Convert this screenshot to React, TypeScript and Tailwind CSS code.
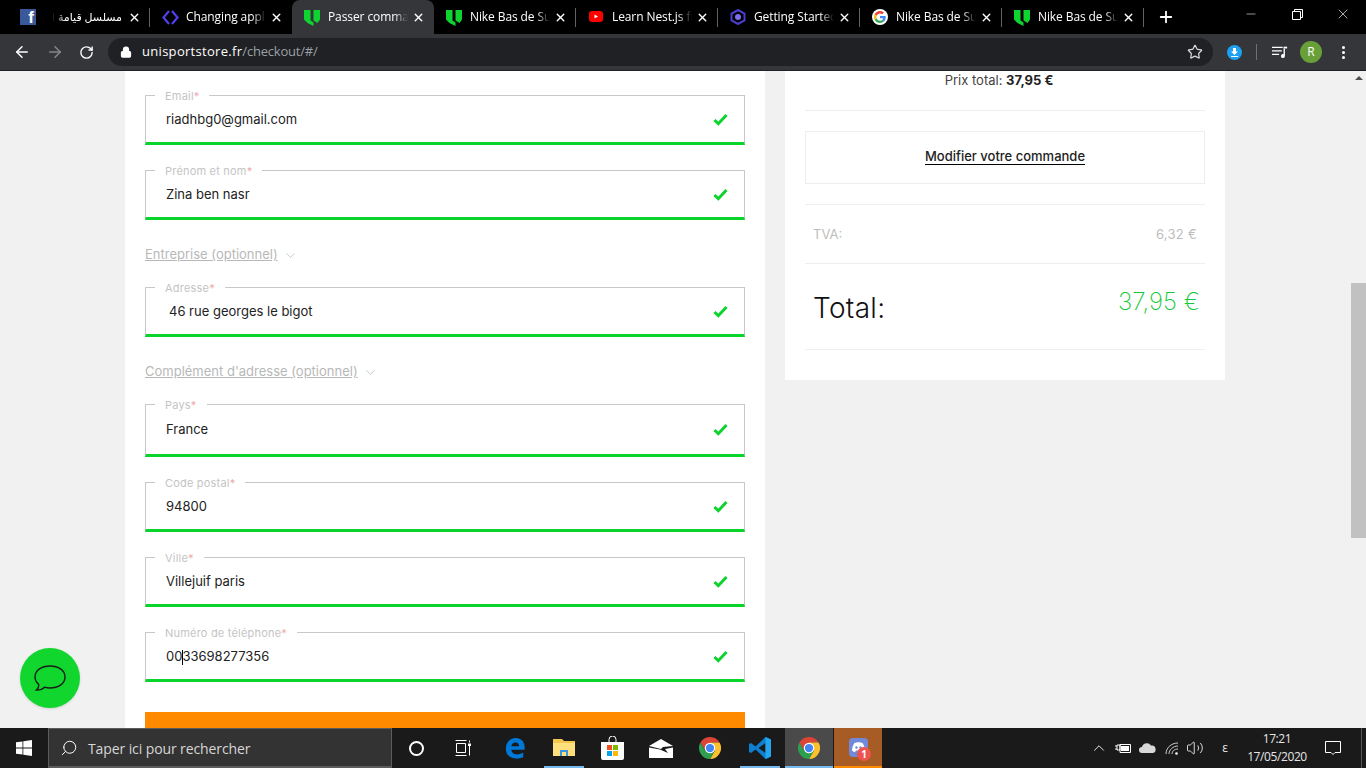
import type React from "react"
import { ArrowLeft, ArrowRight, RotateCw, Lock, Star, X, Plus, Minus, ChevronDown, ChevronUp, Search, Volume2 } from "lucide-react"

const UniIcon = () => (
  <svg width="16" height="17" viewBox="0 0 16 17" className="shrink-0">
    <path d="M0 1h6.500v10.500l3 2V17l-6-3-3.500-3.500z" fill="#0fd32f" />
    <path d="M9.500 1H16v9.500L13.500 14 9.500 11.500z" fill="#0fd32f" />
  </svg>
)

const FbIcon = () => (
  <div className="w-4 h-4 shrink-0 bg-[#3b5998] flex items-end justify-end overflow-hidden">
    <span className="text-white font-bold text-[17px] leading-[15px] pr-[2px] font-['Liberation_Sans',sans-serif]">f</span>
  </div>
)

const DiamondIcon = () => (
  <svg width="17" height="17" viewBox="0 0 17 17" className="shrink-0" fill="none" stroke="#4f3ff0" strokeWidth="2.200">
    <path d="M7 2 1.500 8.500 7 15" />
    <path d="M10 2l5.500 6.500L10 15" />
  </svg>
)

const YtIcon = () => (
  <svg width="16" height="12" viewBox="0 0 16 12" className="shrink-0">
    <rect width="14" height="11" x="1" rx="3" fill="#ff0000" />
    <path d="M6.500 3.500v4l3.500-2z" fill="#fff" />
  </svg>
)

const HexIcon = () => (
  <svg width="16" height="16" viewBox="0 0 16 16" className="shrink-0">
    <path d="M8 1l6.500 3.500v7L8 15l-6.500-3.500v-7z" fill="none" stroke="#4a3fd0" strokeWidth="2" />
    <circle cx="8" cy="8" r="3" fill="#7a6ff0" />
  </svg>
)

const GoogleIcon = () => (
  <div className="w-4 h-4 shrink-0 rounded-full bg-white flex items-center justify-center">
    <svg width="12" height="12" viewBox="0 0 48 48">
      <path fill="#ea4335" d="M24 9.500c3.500 0 6.700 1.300 9.100 3.500l6.800-6.800C35.800 2.400 30.200 0 24 0 14.600 0 6.500 5.400 2.600 13.200l7.900 6.200C12.400 13.600 17.700 9.500 24 9.500z" />
      <path fill="#4285f4" d="M46.900 24.500c0-1.600-.1-3.100-.4-4.500H24v9h12.900c-.6 3-2.200 5.500-4.800 7.200l7.700 6c4.500-4.200 7.100-10.300 7.100-17.700z" />
      <path fill="#fbbc05" d="M10.500 28.600c-.5-1.400-.8-3-.8-4.600s.3-3.200.8-4.600l-7.900-6.200C.9 16.500 0 20.100 0 24s.9 7.500 2.600 10.800z" />
      <path fill="#34a853" d="M24 48c6.500 0 11.900-2.100 15.900-5.800l-7.700-6c-2.100 1.400-4.900 2.300-8.200 2.300-6.300 0-11.600-4.200-13.500-9.900l-7.900 6.200C6.500 42.600 14.600 48 24 48z" />
    </svg>
  </div>
)

const tabs: { title: string; icon: React.ReactNode; rtl?: boolean; active?: boolean }[] = [
  { title: "مسلسل قيامة ار", icon: <FbIcon />, rtl: true },
  { title: "Changing appl", icon: <DiamondIcon /> },
  { title: "Passer comma", icon: <UniIcon />, active: true },
  { title: "Nike Bas de Su", icon: <UniIcon /> },
  { title: "Learn Nest.js fr", icon: <YtIcon /> },
  { title: "Getting Startec", icon: <HexIcon /> },
  { title: "Nike Bas de Su", icon: <GoogleIcon /> },
  { title: "Nike Bas de Su", icon: <UniIcon /> },
]

const Tab = ({ title, icon, rtl, active, sep }: { title: string; icon: React.ReactNode; rtl?: boolean; active?: boolean; sep: boolean }) => (
  <div className={`relative w-[142px] h-[34px] flex items-center pl-3 pr-[9px] ${active ? "bg-[#35363a] rounded-t-lg" : ""}`}>
    <div className="w-4 flex justify-center shrink-0">{icon}</div>
    <div
      dir={rtl ? "rtl" : "ltr"}
      className={`flex-1 min-w-0 overflow-hidden whitespace-nowrap text-white ${rtl ? "text-[11px] ml-4 mr-[2px] [mask-image:linear-gradient(to_right,transparent,black_14px)]" : "text-[12px] ml-2 tracking-[-0.1px] [mask-image:linear-gradient(to_left,transparent,black_14px)]"}`}
    >
      {title}
    </div>
    <X size={13} strokeWidth={2.600} className="text-white shrink-0 ml-1" />
    {sep && <div className="absolute right-0 top-[8px] w-px h-[19px] bg-[#5f6368]" />}
  </div>
)

const fields = [
  { label: "Email", value: "riadhbg0@gmail.com", gapAfter: "mb-[25px]" },
  { label: "Prénom et nom", value: "Zina ben nasr", gapAfter: "mb-[25px]" },
  { optional: "Entreprise (optionnel)" },
  { label: "Adresse", value: " 46 rue georges le bigot", gapAfter: "mb-[25px]", indent: true },
  { optional: "Complément d'adresse (optionnel)" },
  { label: "Pays", value: "France", gapAfter: "mb-[25px]", tall: true },
  { label: "Code postal", value: "94800", gapAfter: "mb-[25px]" },
  { label: "Ville", value: "Villejuif paris", gapAfter: "mb-[25px]" },
  { label: "Numéro de téléphone", value: "00|33698277356", gapAfter: "mb-[30px]" },
]

const Field = ({ label, value, gapAfter, indent, tall }: { label: string; value: string; gapAfter: string; indent?: boolean; tall?: boolean }) => {
  const parts = value.split("|")
  return (
    <div className={`relative ${tall ? "h-[53px]" : "h-[50px]"} border border-[#c8c8c8] border-b-[3px] border-b-[#0ad32c] flex items-center justify-between pl-5 pr-4 ${gapAfter}`}>
      <span className="absolute left-[9px] -top-[7px] bg-white px-[10px] text-[11px] leading-[14px] text-[#c4c4c4] tracking-[0.2px]">
        {label}
        <span className="text-[#eeaaaa]">*</span>
      </span>
      <span className={`text-[13px] text-[#222] pt-[2px] ${indent ? "pl-[3px]" : ""} ${tall ? "-mt-[1px]" : ""}`}>
        {parts[0]}
        {parts.length > 1 && <span className="inline-block w-px h-[15px] bg-black align-middle -mr-px" />}
        {parts[1]}
      </span>
      <svg width="15" height="13" viewBox="0 0 15 13" className="shrink-0">
        <path d="M1.500 7l3.800 3.700L13.500 2" fill="none" stroke="#0ad32c" strokeWidth="3" />
      </svg>
    </div>
  )
}

const Optional = ({ text }: { text: string }) => (
  <div className="h-[67px] -mt-[25px] pt-[3px] flex items-center gap-[6px] text-[13px] text-[#b8b8b8]">
    <span className="underline">{text}</span>
    <ChevronDown size={15} strokeWidth={1.200} className="-ml-[1px]" />
  </div>
)

const ChromeIcon = () => (
  <svg width="22" height="22" viewBox="0 0 48 48">
    <path d="M3.200 12A24 24 0 0 1 44.800 12H24L13.600 30z" fill="#db4437" />
    <path d="M44.800 12A24 24 0 0 1 24 48L34.400 30 24 12z" fill="#fbc02d" />
    <path d="M24 48A24 24 0 0 1 3.200 12L13.600 30 34.400 30z" fill="#2e9e4f" />
    <circle cx="24" cy="24" r="11.500" fill="#fff" />
    <circle cx="24" cy="24" r="9" fill="#4285f4" />
  </svg>
)

const TaskSlot = ({ className, children }: { className?: string; children: React.ReactNode }) => (
  <div className={`h-10 flex items-center justify-center shrink-0 ${className ?? ""}`}>{children}</div>
)

export default function App() {
  return (
    <div className="w-[1366px] h-[768px] overflow-hidden flex flex-col font-['Inter',sans-serif] bg-[#f1f1f1]">
      {/* Tab strip */}
      <div className="h-[34px] bg-black flex pl-2 font-['Open_Sans','DejaVu_Sans',sans-serif] shrink-0">
        {tabs.map((t, i) => (
          <Tab key={i} {...t} sep={i !== 1 && i !== 2 && !t.active} />
        ))}
        <div className="w-[44px] flex items-center justify-center">
          <Plus size={18} strokeWidth={2.400} className="text-white" />
        </div>
        <div className="ml-auto flex">
          <div className="w-[47px] flex items-center justify-center pb-[6px]"><Minus size={14} strokeWidth={1} className="text-white" /></div>
          <div className="w-[46px] flex items-center justify-center pb-[6px]">
            <svg width="11" height="11" viewBox="0 0 11 11" fill="none" stroke="#fff"><path d="M.5 2.500h8v8h-8zM2.500 2.500v-2h8v8h-2" /></svg>
          </div>
          <div className="w-[46px] flex items-center justify-center pb-[6px] pr-[1px]"><X size={16} strokeWidth={1} className="text-white" /></div>
        </div>
      </div>

      {/* Toolbar */}
      <div className="h-[37px] bg-[#35363a] border-b border-[#202124] flex items-start shrink-0 pt-1">
        <div className="w-[108px] h-7 flex items-center pl-[13px] gap-[15px] shrink-0">
          <ArrowLeft size={18} strokeWidth={2} className="text-white" />
          <ArrowRight size={18} strokeWidth={2} className="text-[#85868a]" />
          <RotateCw size={15} strokeWidth={2.200} className="text-white" />
        </div>
        <div className="w-[1105px] h-7 rounded-full bg-[#202124] flex items-center pl-[12px] pr-[10px] shrink-0 font-['Open_Sans',sans-serif]">
          <Lock size={12} strokeWidth={2.500} className="text-white fill-white" />
          <span className="ml-[10px] text-[13px] text-white tracking-[0.3px]">unisportstore.fr</span>
          <span className="text-[13px] text-[#9aa0a6] tracking-[-0.2px]">/checkout/#/</span>
          <Star size={16} strokeWidth={1.800} className="text-[#dadce0] ml-auto" />
        </div>
        <div className="flex-1 h-7 flex items-center">
          <div className="ml-[14px] w-[15px] h-[15px] rounded-full bg-[#1da1f2] flex items-center justify-center">
            <svg width="9" height="9" viewBox="0 0 9 9" fill="#fff"><path d="M3 0h3v3.500h2L4.500 7 1 3.500h2zM1 8h7v1H1z" /></svg>
          </div>
          <div className="ml-[14px] w-px h-4 bg-[#6f7074]" />
          <svg width="16" height="14" viewBox="0 0 18 14" className="ml-[15px]" fill="#fff">
            <path d="M0 1h12v1.500H0zM0 5h11v1.500H0zM0 9h8v1.500H0z" />
            <path d="M13 3h1.500v8.500a2.200 2.200 0 1 1-1.500-2z" />
            <path d="M13 1h4v2h-4z" />
          </svg>
          <div className="ml-[12px] w-[22px] h-[22px] rounded-full bg-[#689f38] text-white text-[12px] flex items-center justify-center font-['Open_Sans',sans-serif]">R</div>
          <div className="ml-[20px] flex flex-col gap-[2px]">
            <div className="w-[3px] h-[3px] rounded-full bg-white" />
            <div className="w-[3px] h-[3px] rounded-full bg-white" />
            <div className="w-[3px] h-[3px] rounded-full bg-white" />
          </div>
        </div>
      </div>

      {/* Page */}
      <div className="relative flex-1 min-h-0 flex overflow-hidden">
        <div className="flex-1 flex pl-[125px] items-start">
          <div className="w-[640px] h-[657px] bg-white px-5 pt-6 overflow-hidden shrink-0">
            {fields.map((f, i) =>
              f.optional ? (
                <Optional key={i} text={f.optional} />
              ) : (
                <Field key={i} label={f.label!} value={f.value!} gapAfter={f.gapAfter!} indent={f.indent} tall={f.tall} />
              ),
            )}
            <div className="h-[50px] bg-[#ff8a00]" />
          </div>
          <div className="w-[440px] h-[309px] ml-5 bg-white px-5 shrink-0">
            <div className="h-[40px] border-b border-[#eee] text-center text-[13px] text-[#444] pt-[2px] pr-3 leading-[15px]">
              Prix total: <b className="font-bold text-[#222]">37,95 €</b>
            </div>
            <div className="mt-5 h-[53px] border border-[#eee] flex items-center justify-center">
              <span className="text-[13px] font-medium text-[#222] border-b border-black leading-[15px] mb-[1px]">Modifier votre commande</span>
            </div>
            <div className="mt-5 h-[60px] border-t border-b border-[#eee] flex items-center justify-between px-2 pt-[2px] text-[13px] text-[#bdbdbd]">
              <span>TVA:</span>
              <span className="tracking-[0.3px]">6,32 €</span>
            </div>
            <div className="h-[86px] border-b border-[#eee] flex justify-between px-2">
              <span className="text-[28px] font-light text-[#111] leading-[34px] mt-[27px] tracking-[0.3px]">Total:</span>
              <span className="text-[24px] font-extralight text-[#12c93a] leading-[30px] mt-[23px] -mr-[3px]">37,95 €</span>
            </div>
          </div>
        </div>

        {/* Scrollbar */}
        <div className="w-[15px] shrink-0 bg-[#f1f1f1] flex flex-col items-center">
          <div className="mt-[5px] w-0 h-0 border-l-[4px] border-r-[4px] border-b-[4px] border-l-transparent border-r-transparent border-b-[#505050]" />
          <div className="w-full h-[255px] bg-[#c1c1c1] mt-[203px]" />
        </div>

        {/* Chat bubble */}
        <div className="absolute left-5 bottom-5 w-[60px] h-[60px] rounded-full bg-[#10d62e] flex items-center justify-center shadow-sm">
          <svg width="32" height="28" viewBox="0 0 32 28" fill="none" stroke="#1a1a1a" strokeWidth="1.400">
            <path d="M16 2c8 0 15 4 15 11s-7 11-15 11c-2 0-4-.3-5.500-.8C9 25 6 26 2.500 26c1.500-1.500 2.500-3.500 2.300-5.500C2.500 18.500 1 16 1 13 1 6 8 2 16 2z" />
          </svg>
        </div>
      </div>

      {/* Taskbar */}
      <div className="h-10 bg-[#1a1a1a] flex items-center shrink-0 font-['Open_Sans',sans-serif]">
        <TaskSlot className="w-12">
          <svg width="16" height="16" viewBox="0 0 16 16" fill="#fff"><path d="M0 2.300 6.500 1.400v6.200H0zM7.300 1.300 16 0v7.600H7.300zM0 8.400h6.500v6.200L0 13.700zM7.300 8.400H16V16l-8.700-1.200z" /></svg>
        </TaskSlot>
        <div className="w-[344px] h-10 bg-[#333] border border-[#5c5c5c] border-b-[2px] flex items-center pl-[11px]">
          <Search size={18} strokeWidth={1.300} className="text-white scale-x-[-1]" />
          <span className="ml-[10px] pt-[1px] text-[14px] text-[#d6d6d6] tracking-[-0.1px]">Taper ici pour rechercher</span>
        </div>
        <TaskSlot className="w-12">
          <div className="w-[15px] h-[15px] rounded-full border-[2px] border-white" />
        </TaskSlot>
        <TaskSlot className="w-[46px]">
          <svg width="16" height="16" viewBox="0 0 16 16" fill="none" stroke="#fff"><path d="M1.500 3.500h9v9h-9zM.5.500h11M.5 15.500h11M14.500.5v2M14.500 6v9.500" /><path d="M13 3.500h3v2.500h-3z" fill="#fff" stroke="none" /></svg>
        </TaskSlot>
        <TaskSlot className="w-[54px] pl-1">
          <svg width="22" height="22" viewBox="0 0 24 24">
            <path d="M2 13C2 6 6.500 1 13 1c5.500 0 9.500 4 9.500 10v3H8c.3 3.500 3 5 6 5 3 0 5-1 7-2v5c-2 1-4.500 1.500-7.500 1.500C7 23.500 2 19.500 2 13zM8 10h8.500c0-2.500-1.500-4-4-4-2.400 0-4 1.500-4.500 4z" fill="#0078d7" />
          </svg>
        </TaskSlot>
        <TaskSlot className="w-[48px] relative">
          <svg width="22" height="20" viewBox="0 0 22 20">
            <path d="M0 1h9l2 2h11v15H0z" fill="#f3c64c" />
            <path d="M0 5h22v13H0z" fill="#ffdf7e" />
            <path d="M7 18v-6h8v6h-2v-4H9v4z" fill="#3a96dd" />
          </svg>
          <div className="absolute bottom-0 left-[4px] w-[40px] h-[2px] bg-[#76b9ed]" />
        </TaskSlot>
        <TaskSlot className="w-[48px]">
          <svg width="23" height="24" viewBox="0 0 23 24">
            <path d="M8 6V3.500a3.500 3.500 0 0 1 7 0V6" fill="none" stroke="#fff" strokeWidth="1" />
            <path d="M0 6h23v16a2 2 0 0 1-2 2H2a2 2 0 0 1-2-2z" fill="#fff" />
            <path d="M6 9h5v5H6z" fill="#f25022" />
            <path d="M12 9h5v5h-5z" fill="#7fba00" />
            <path d="M6 15h5v5H6z" fill="#00a4ef" />
            <path d="M12 15h5v5h-5z" fill="#ffb900" />
          </svg>
        </TaskSlot>
        <TaskSlot className="w-[50px]">
          <svg width="24" height="19" viewBox="0 0 24 19">
            <path d="M0 7 12 0l12 7-10 1-2 2z" fill="#fff" />
            <path d="M0 8.500V19h24V8.500L16 10l3 4-8-3.500z" fill="#fff" />
          </svg>
        </TaskSlot>
        <TaskSlot className="w-[48px]"><ChromeIcon /></TaskSlot>
        <TaskSlot className="w-[51px] relative">
          <svg width="24" height="24" viewBox="0 0 24 24">
            <path d="M17.500 1 7.500 10.500 3 7 1 8v8l2 1 4.500-3.500 10 9.500 5.500-2.500V3.500z" fill="#0e7fd0" />
            <path d="M17.500 7v10L10.500 12z" fill="#1a1a1a" />
            <path d="M17.500 1 23 3.500v17L17.500 23z" fill="#24a5f0" />
          </svg>
          <div className="absolute bottom-0 left-[6px] w-[40px] h-[2px] bg-[#76b9ed]" />
        </TaskSlot>
        <TaskSlot className="w-[48px] bg-[#4a4a4a] relative">
          <ChromeIcon />
          <div className="absolute bottom-0 left-0 w-full h-[2px] bg-[#76b9ed]" />
        </TaskSlot>
        <TaskSlot className="w-[48px] ml-px bg-[#a65c24] relative">
          <div className="w-[19px] h-[19px] rounded-[4px] bg-[#7289da] flex items-center justify-center -mt-[2px]">
            <svg width="13" height="10" viewBox="0 0 13 10">
              <path d="M2.500 1C4.500 0 8.500 0 10.500 1 12 3 13 6 13 8.500 12 9.500 11 10 10 10l-1-1.500H4L3 10C2 10 1 9.500 0 8.500 0 6 1 3 2.500 1z" fill="#fff" />
              <circle cx="4.500" cy="5.500" r="1.200" fill="#7289da" />
              <circle cx="8.500" cy="5.500" r="1.200" fill="#7289da" />
            </svg>
          </div>
          <div className="absolute left-[23px] top-[19px] w-[14px] h-[14px] rounded-full bg-[#ef5350] text-white text-[10px] font-bold leading-[14px] text-center">1</div>
          <div className="absolute bottom-0 left-0 w-full h-[2px] bg-[#ff8a00]" />
        </TaskSlot>

        <div className="ml-auto flex items-center text-white pr-1 h-full">
          <ChevronUp size={18} strokeWidth={1.200} />
          <svg width="16" height="12" viewBox="0 0 16 12" className="ml-[7px]" fill="none" stroke="#fff"><path d="M5 2.500h10.500v8H5zM0 4h2M0 7h2M2 3h3v5H2z" /><path d="M6 4h8v5H6z" fill="#fff" stroke="none" /></svg>
          <svg width="17" height="10" viewBox="0 0 17 10" className="ml-2" fill="#d8d8d8"><path d="M3 10a3 3 0 0 1 0-6 5 5 0 0 1 9-1.500A3.800 3.800 0 0 1 13.500 10z" /></svg>
          <svg width="14" height="13" viewBox="0 0 14 13" className="ml-[9px]" fill="none" stroke="#cfcfcf" strokeWidth="1"><path d="M1 12C1 6 6 1 13 1M4 12c0-4 4-8 9-8M7 12c0-2.500 2-5 6-5" /><circle cx="11.500" cy="11.500" r="1.300" fill="#fff" stroke="none" /></svg>
          <Volume2 size={18} strokeWidth={1.100} className="ml-[7px]" />
          <span className="ml-[12px] text-[12px] w-[18px] text-center text-[#e6e6e6]">ε</span>
          <div className="w-[70px] ml-[8px] text-center text-[12px] tracking-[-0.4px] leading-[18px] text-[#e6e6e6]">
            <div>17:21</div>
            <div>17/05/2020</div>
          </div>
          <svg width="16" height="16" viewBox="0 0 16 16" className="ml-[13px]" fill="none" stroke="#fff"><path d="M.5 1.500h15v11H10l-2 2-2-2H.5z" /></svg>
          <div className="ml-[20px] w-px h-10 bg-[#555]" />
        </div>
      </div>
    </div>
  )
}
